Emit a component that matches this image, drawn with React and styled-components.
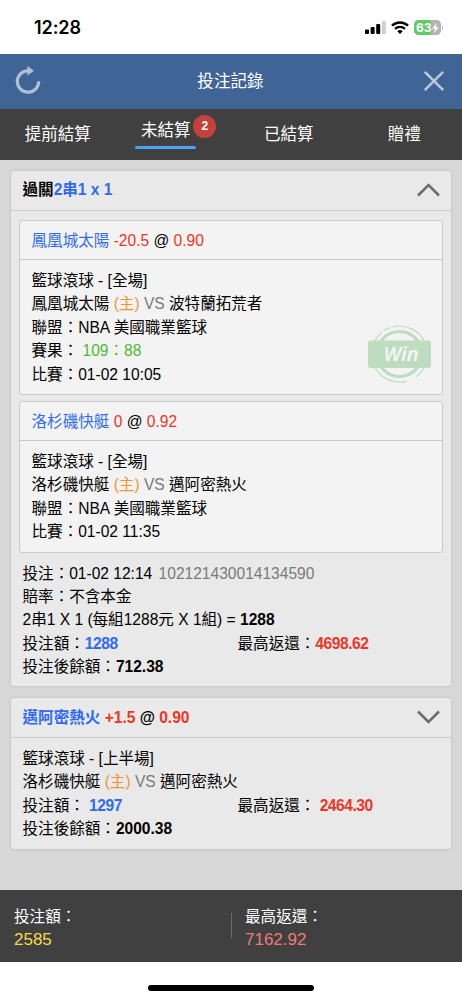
import styled, { createGlobalStyle, ThemeProvider } from 'styled-components';

const theme = {
  font: '"Liberation Sans", "Noto Sans CJK TC", sans-serif',
  blue: '#2f6bf2',
  red: '#ee3527',
  green: '#4fb934',
  orange: '#f29331',
  grey: '#7a7a7a',
  dark: '#404040',
  header: '#3f6495',
  card: '#e9e9e9',
  line: '#c9c9c9',
};

const GlobalStyle = createGlobalStyle`
  * {
    box-sizing: border-box;
  }

  body {
    margin: 0;
    background-color: #fff;
  }
`;

const Page = styled.div`
  width: 462px;
  height: 1000px;
  display: flex;
  flex-direction: column;
  overflow: hidden;
  font-family: ${props => props.theme.font};
  font-size: 15.57px;
  line-height: 23.4px;
  color: #000;
`;

const StatusBar = styled.div`
  height: 53.5px;
  flex: none;
  display: flex;
  justify-content: space-between;
  align-items: center;
  padding: 2px 19px 0 34px;
`;

const Clock = styled.span`
  font-family: Inter, sans-serif;
  font-size: 18px;
  font-weight: 600;
  letter-spacing: -0.1px;
`;

const StatusIcons = styled.div`
  display: flex;
  align-items: center;
  gap: 5px;
`;

const Battery = styled.div`
  display: flex;
  align-items: center;
  gap: 1px;

  &::after {
    content: '';
    width: 1.5px;
    height: 5px;
    border-radius: 0 2px 2px 0;
    background-color: #b9b9b9;
  }
`;

const BatteryBody = styled.div`
  width: 27px;
  height: 15px;
  display: flex;
  align-items: center;
  padding-left: 2.5px;
  border-radius: 4.5px;
  background: linear-gradient(to right, #65c966 63%, #b4b4b4 63%);
  font-family: Inter, sans-serif;
  font-size: 12px;
  font-weight: 700;
  color: #fff;
`;

const Header = styled.header`
  height: 55.5px;
  flex: none;
  display: flex;
  justify-content: space-between;
  align-items: center;
  padding: 0 17px 0 14px;
  background-color: ${props => props.theme.header};
`;

const Title = styled.h1`
  margin: 0 4px 0 0;
  font-size: 16.6px;
  font-weight: 400;
  color: #fff;
`;

const Tabs = styled.nav`
  height: 50.5px;
  flex: none;
  display: grid;
  grid-template-columns: repeat(4, 1fr);
  background-color: ${props => props.theme.dark};
`;

const Tab = styled.div`
  display: flex;
  justify-content: center;
  align-items: center;
  padding-top: 1px;
  font-size: 16.5px;
  color: #fff;
`;

const ActiveTab = styled.div`
  position: relative;
  height: 30px;
  width: 61px;
  margin: -2px 15px 0 0;
  display: flex;
  justify-content: center;
  align-items: flex-start;

  &::after {
    content: '';
    position: absolute;
    left: 0;
    bottom: 0;
    width: 61px;
    height: 3px;
    border-radius: 1.5px;
    background-color: #4da3f5;
  }
`;

const Badge = styled.span`
  position: absolute;
  top: -4px;
  left: 58px;
  width: 23px;
  height: 23px;
  border-radius: 50%;
  background-color: #c4423d;
  font-size: 12px;
  font-weight: 700;
  line-height: 23px;
  text-align: center;
`;

const Content = styled.main`
  flex: 1;
  display: flex;
  flex-direction: column;
  gap: 11.5px;
  padding: 11px 11px 0;
  background-color: #d7d7d7;
`;

const Card = styled.section`
  border-radius: 3px;
  background-color: ${props => props.theme.card};
  box-shadow: 0 0 3px rgba(0, 0, 0, 0.15);
`;

const CardHead = styled.div`
  height: 40px;
  display: flex;
  justify-content: space-between;
  align-items: center;
  padding: 0 11px 0 11.5px;
  border-bottom: 1px solid ${props => props.theme.line};
  font-weight: 700;
`;

const CardBody = styled.div`
  padding: ${props => (props.$tight ? '1px' : '9px')} 11.5px 8px;
`;

const Legs = styled.div`
  display: flex;
  flex-direction: column;
  gap: 6px;
  padding: 9.5px 8px 8px;
`;

const Leg = styled.article`
  position: relative;
  border: 1px solid ${props => props.theme.line};
  border-radius: 3px;
  background-color: #f3f3f3;
`;

const LegHead = styled.div`
  height: 39px;
  display: flex;
  align-items: center;
  padding: 1px 11.5px 0;
  border-bottom: 1px solid ${props => props.theme.line};
`;

const LegBody = styled.div`
  padding: 9px 11.5px 8px;
`;

const Row = styled.div`
  height: 23.4px;
  white-space: pre;
`;

const SplitRow = styled(Row)`
  display: grid;
  grid-template-columns: 215px 1fr;
`;

const Mark = styled.span`
  color: ${props => props.theme[props.$color]};
`;

const BetId = styled(Mark)`
  margin-left: 2px;
`;

const Amount = styled.b`
  letter-spacing: -0.45px;
  color: ${props => props.theme[props.$color]};
`;

const Stamp = styled.svg`
  position: absolute;
  right: 11px;
  bottom: 11px;
`;

const Totals = styled.footer`
  height: 72.5px;
  flex: none;
  display: grid;
  grid-template-columns: 231px 1fr;
  align-items: center;
  background-color: ${props => props.theme.dark};
`;

const Total = styled.div`
  padding: 5px 0 0 14px;
  color: #fff;

  & + & {
    padding-left: 14px;
    box-shadow: inset 1px 0 0 #6b6b6b;
    height: 25px;
    display: flex;
    flex-direction: column;
    justify-content: center;
  }
`;

const TotalValue = styled.div`
  font-size: 17px;
  color: ${props => props.$color};
`;

const HomeBar = styled.div`
  height: 38px;
  flex: none;
  display: flex;
  justify-content: center;
  align-items: flex-start;
  padding-top: 23px;

  &::after {
    content: '';
    width: 166px;
    height: 6px;
    border-radius: 3px;
    background-color: #000;
  }
`;

const legs = [
  {
    team: '鳳凰城太陽',
    line: '-20.5',
    odds: '0.90',
    away: '波特蘭拓荒者',
    score: '109：88',
    time: '01-02 10:05',
    win: true,
  },
  {
    team: '洛杉磯快艇',
    line: '0',
    odds: '0.92',
    away: '邁阿密熱火',
    time: '01-02 11:35',
  },
];

function Chevron({ up }) {
  return (
    <svg width="23" height="14" viewBox="0 0 23 14" fill="none">
      <path
        d={up ? 'M1 12.5 11.5 2 22 12.5' : 'M1 1.5 11.5 12 22 1.5'}
        stroke="#6c6c6c"
        strokeWidth="2.5"
      />
    </svg>
  );
}

function WinStamp() {
  return (
    <Stamp width="63" height="58" viewBox="0 0 63 58" fill="none">
      <circle cx="31.5" cy="29" r="22.5" stroke="#bedcc0" strokeWidth="3.2" />
      <g stroke="#bedcc0" strokeWidth="1.2">
        <path d="M25 1.8A28 28 0 0 1 57 17.5" />
        <path d="M16 5.6A28 28 0 0 1 22.5 2.4" />
        <path d="M6 17.5A28 28 0 0 1 14 7.2" />
        <path d="M57 40.5A28 28 0 0 1 48 51.8" />
        <path d="M6 40.5A28 28 0 0 0 38.5 56.3" />
      </g>
      <rect y="15.5" width="63" height="27.5" rx="3" fill="#bedcc0" />
      <text
        x="33"
        y="36.3"
        textAnchor="middle"
        fontFamily="'Noto Sans', 'Open Sans', sans-serif"
        fontSize="20"
        fontStyle="italic"
        fontWeight="600"
        fill="#f5f5f5"
      >
        Win
      </text>
    </Stamp>
  );
}

function Matchup({ home, away }) {
  return (
    <Row>
      {home} <Mark $color="orange">(主)</Mark> <Mark $color="grey">VS</Mark> {away}
    </Row>
  );
}

function Pick({ team, line, odds }) {
  return (
    <span>
      <Mark $color="blue">{team}</Mark> <Mark $color="red">{line}</Mark> @{' '}
      <Mark $color="red">{odds}</Mark>
    </span>
  );
}

function BetLeg({ leg }) {
  return (
    <Leg>
      <LegHead>
        <Pick team={leg.team} line={leg.line} odds={leg.odds} />
      </LegHead>
      <LegBody>
        <Row>籃球滾球 - [全場]</Row>
        <Matchup home={leg.team} away={leg.away} />
        <Row>聯盟：NBA 美國職業籃球</Row>
        {leg.score && (
          <Row>
            賽果： <Mark $color="green">{leg.score}</Mark>
          </Row>
        )}
        <Row>比賽：{leg.time}</Row>
      </LegBody>
      {leg.win && <WinStamp />}
    </Leg>
  );
}

function App() {
  return (
    <ThemeProvider theme={theme}>
      <GlobalStyle />
      <Page>
        <StatusBar>
          <Clock>12:28</Clock>
          <StatusIcons>
            <svg width="21" height="13" viewBox="0 0 21 13">
              <rect x="0" y="8.5" width="4" height="4.5" rx="1" />
              <rect x="5.6" y="6" width="4" height="7" rx="1" />
              <rect x="11.2" y="3" width="4" height="10" rx="1" />
              <rect x="16.8" y="0" width="4" height="13" rx="1" fill="#cfcfcf" />
            </svg>
            <svg width="18" height="13" viewBox="0 0 18 13" fill="none" stroke="#000">
              <path d="M1 4.6a11.6 11.6 0 0 1 16 0" strokeWidth="2.5" />
              <path d="M4 7.9a7.2 7.2 0 0 1 10 0" strokeWidth="2.3" />
              <path d="M9 13 6.3 10.2a4 4 0 0 1 5.4 0Z" fill="#000" stroke="none" />
            </svg>
            <Battery>
              <BatteryBody>
                63
                <svg width="7" height="10" viewBox="0 0 7 10" fill="#fff">
                  <path d="M4.6 0 0.2 5.7h2.7L2.2 10 6.8 4.2H4Z" />
                </svg>
              </BatteryBody>
            </Battery>
          </StatusIcons>
        </StatusBar>
        <Header>
          <svg width="28" height="30" viewBox="0 0 28 30" fill="none">
            <path
              d="M14.6 4.8A10.7 10.7 0 1 0 24.7 15.3"
              stroke="#afc1d7"
              strokeWidth="3.2"
            />
            <path d="M13.4 0 20 4.7 13.4 9.6Z" fill="#afc1d7" />
          </svg>
          <Title>投注記錄</Title>
          <svg width="22" height="22" viewBox="0 0 22 22" fill="none">
            <path d="M1.8 1.8 20.2 20.2M20.2 1.8 1.8 20.2" stroke="#b8c9dc" strokeWidth="2.6" />
          </svg>
        </Header>
        <Tabs>
          <Tab>提前結算</Tab>
          <Tab>
            <ActiveTab>
              未結算
              <Badge>2</Badge>
            </ActiveTab>
          </Tab>
          <Tab>已結算</Tab>
          <Tab>贈禮</Tab>
        </Tabs>
        <Content>
          <Card>
            <CardHead>
              <span>
                過關<Mark $color="blue">2串1 x 1</Mark>
              </span>
              <Chevron up />
            </CardHead>
            <Legs>
              {legs.map(leg => (
                <BetLeg key={leg.team} leg={leg} />
              ))}
            </Legs>
            <CardBody $tight>
              <Row>
                投注：01-02 12:14 <BetId $color="grey">102121430014134590</BetId>
              </Row>
              <Row>賠率：不含本金</Row>
              <Row>
                2串1 X 1 (每組1288元 X 1組) = <b>1288</b>
              </Row>
              <SplitRow>
                <span>
                  投注額：<Amount $color="blue">1288</Amount>
                </span>
                <span>
                  最高返還：<Amount $color="red">4698.62</Amount>
                </span>
              </SplitRow>
              <Row>
                投注後餘額：<b>712.38</b>
              </Row>
            </CardBody>
          </Card>
          <Card>
            <CardHead>
              <Pick team="邁阿密熱火" line="+1.5" odds="0.90" />
              <Chevron />
            </CardHead>
            <CardBody>
              <Row>籃球滾球 - [上半場]</Row>
              <Matchup home="洛杉磯快艇" away="邁阿密熱火" />
              <SplitRow>
                <span>
                  投注額： <Amount $color="blue">1297</Amount>
                </span>
                <span>
                  最高返還： <Amount $color="red">2464.30</Amount>
                </span>
              </SplitRow>
              <Row>
                投注後餘額：<b>2000.38</b>
              </Row>
            </CardBody>
          </Card>
        </Content>
        <Totals>
          <Total>
            投注額：
            <TotalValue $color="#f3dc45">2585</TotalValue>
          </Total>
          <Total>
            最高返還：
            <TotalValue $color="#ec7b75">7162.92</TotalValue>
          </Total>
        </Totals>
        <HomeBar />
      </Page>
    </ThemeProvider>
  );
}

export default App;
